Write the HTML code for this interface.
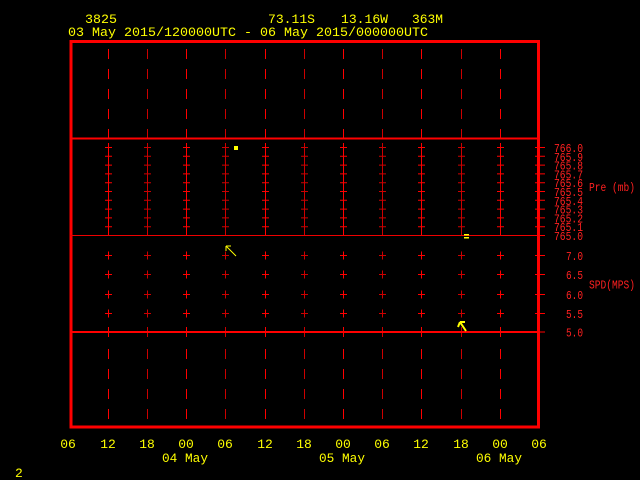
<!DOCTYPE html>
<html><head><style>
html,body{margin:0;padding:0;background:#000;width:640px;height:480px;overflow:hidden}
svg{display:block}
text{font-family:"Liberation Mono","DejaVu Sans Mono",monospace;font-size:13px}
.s{font-size:12px}
</style></head><body>
<svg width="640" height="480" viewBox="0 0 640 480" xmlns="http://www.w3.org/2000/svg">
<defs>
<g id="col" fill="none" stroke-width="1">
<path d="M0 49v10M0 69v10M0 89v10M0 109v10M0 129v9M0 349v10M0 369v10M0 389v10M0 409v10"/>
<path d="M0 143v92M-3.5 147.5h7M-3.5 156.3h7M-3.5 165.1h7M-3.5 173.9h7M-3.5 182.7h7M-3.5 191.5h7M-3.5 200.3h7M-3.5 209.1h7M-3.5 217.9h7M-3.5 226.7h7"/>
<path d="M-3.5 255.5h7M0 251.5v8M-3.5 274.5h7M0 270.5v8M-3.5 294.5h7M0 290.5v8M-3.5 313.5h7M0 309.5v8M0 327v10"/>
</g>
</defs>
<rect width="640" height="480" fill="#000"/>
<g stroke="#ff0000">
<use href="#col" x="108.5"/><use href="#col" x="147.5" stroke="#c00"/><use href="#col" x="186.5"/><use href="#col" x="225.5" stroke="#c00"/><use href="#col" x="265.5"/><use href="#col" x="304.5" stroke="#c00"/><use href="#col" x="343.5"/><use href="#col" x="382.5" stroke="#c00"/><use href="#col" x="421.5"/><use href="#col" x="461.5" stroke="#c00"/><use href="#col" x="500.5"/>
</g>
<g fill="none" stroke="#ff0000">
<rect x="71" y="41.5" width="467.5" height="385.5" stroke-width="3"/>
<path d="M70 138.5h470M70 332h470" stroke-width="2"/>
<path d="M70 235.5h470" stroke-width="1" stroke="#e00"/>
<path d="M535 147.5h10M535 156.3h10M535 165.1h10M535 173.9h10M535 182.7h10M535 191.5h10M535 200.3h10M535 209.1h10M535 217.9h10M535 226.7h10M535 235.5h10M535 255.5h10M535 274.5h10M535 294.5h10M535 313.5h10M535 332h10"/>
</g>
<g fill="#ff2020">
<text class="s" x="554" y="152" textLength="29" lengthAdjust="spacingAndGlyphs">766.0</text>
<text class="s" x="554" y="160.8" textLength="29" lengthAdjust="spacingAndGlyphs">765.9</text>
<text class="s" x="554" y="169.6" textLength="29" lengthAdjust="spacingAndGlyphs">765.8</text>
<text class="s" x="554" y="178.4" textLength="29" lengthAdjust="spacingAndGlyphs">765.7</text>
<text class="s" x="554" y="187.2" textLength="29" lengthAdjust="spacingAndGlyphs">765.6</text>
<text class="s" x="554" y="196" textLength="29" lengthAdjust="spacingAndGlyphs">765.5</text>
<text class="s" x="554" y="204.8" textLength="29" lengthAdjust="spacingAndGlyphs">765.4</text>
<text class="s" x="554" y="213.6" textLength="29" lengthAdjust="spacingAndGlyphs">765.3</text>
<text class="s" x="554" y="222.4" textLength="29" lengthAdjust="spacingAndGlyphs">765.2</text>
<text class="s" x="554" y="231.2" textLength="29" lengthAdjust="spacingAndGlyphs">765.1</text>
<text class="s" x="554" y="240" textLength="29" lengthAdjust="spacingAndGlyphs">765.0</text>
<text class="s" x="566" y="260" textLength="17" lengthAdjust="spacingAndGlyphs">7.0</text>
<text class="s" x="566" y="279" textLength="17" lengthAdjust="spacingAndGlyphs">6.5</text>
<text class="s" x="566" y="299" textLength="17" lengthAdjust="spacingAndGlyphs">6.0</text>
<text class="s" x="566" y="318" textLength="17" lengthAdjust="spacingAndGlyphs">5.5</text>
<text class="s" x="566" y="336.5" textLength="17" lengthAdjust="spacingAndGlyphs">5.0</text>
<text class="s" x="589" y="191" textLength="46" lengthAdjust="spacingAndGlyphs">Pre (mb)</text>
<text class="s" x="589" y="288.5" textLength="46" lengthAdjust="spacingAndGlyphs">SPD(MPS)</text>
</g>
<g fill="#ffff00">
<rect x="234" y="146" width="4" height="4"/>
<rect x="464" y="234" width="5" height="1.5"/><rect x="464" y="237" width="5" height="1.5"/>
</g>
<g fill="none" stroke="#ffff00">
<path d="M236 256L226 246M226 246v5M226 246h5" stroke-width="1"/>
<path d="M466 331L460 322M460 322l-2 5M460 322h5" stroke-width="2"/>
</g>
<g fill="#ffff00">
<text x="85" y="23" textLength="32" lengthAdjust="spacingAndGlyphs">3825</text>
<text x="268" y="23" textLength="47" lengthAdjust="spacingAndGlyphs">73.11S</text>
<text x="341" y="23" textLength="47" lengthAdjust="spacingAndGlyphs">13.16W</text>
<text x="412" y="23" textLength="31" lengthAdjust="spacingAndGlyphs">363M</text>
<text x="68" y="36" textLength="360" lengthAdjust="spacingAndGlyphs">03 May 2015/120000UTC - 06 May 2015/000000UTC</text>
<g text-anchor="middle">
<text x="68" y="448">06</text><text x="108" y="448">12</text><text x="147" y="448">18</text><text x="186" y="448">00</text><text x="225" y="448">06</text><text x="265" y="448">12</text><text x="304" y="448">18</text><text x="343" y="448">00</text><text x="382" y="448">06</text><text x="421" y="448">12</text><text x="461" y="448">18</text><text x="500" y="448">00</text><text x="539" y="448">06</text>
</g>
<text x="162" y="462" textLength="46" lengthAdjust="spacingAndGlyphs">04 May</text>
<text x="319" y="462" textLength="46" lengthAdjust="spacingAndGlyphs">05 May</text>
<text x="476" y="462" textLength="46" lengthAdjust="spacingAndGlyphs">06 May</text>
<text x="15" y="477">2</text>
</g>
</svg>
</body></html>
